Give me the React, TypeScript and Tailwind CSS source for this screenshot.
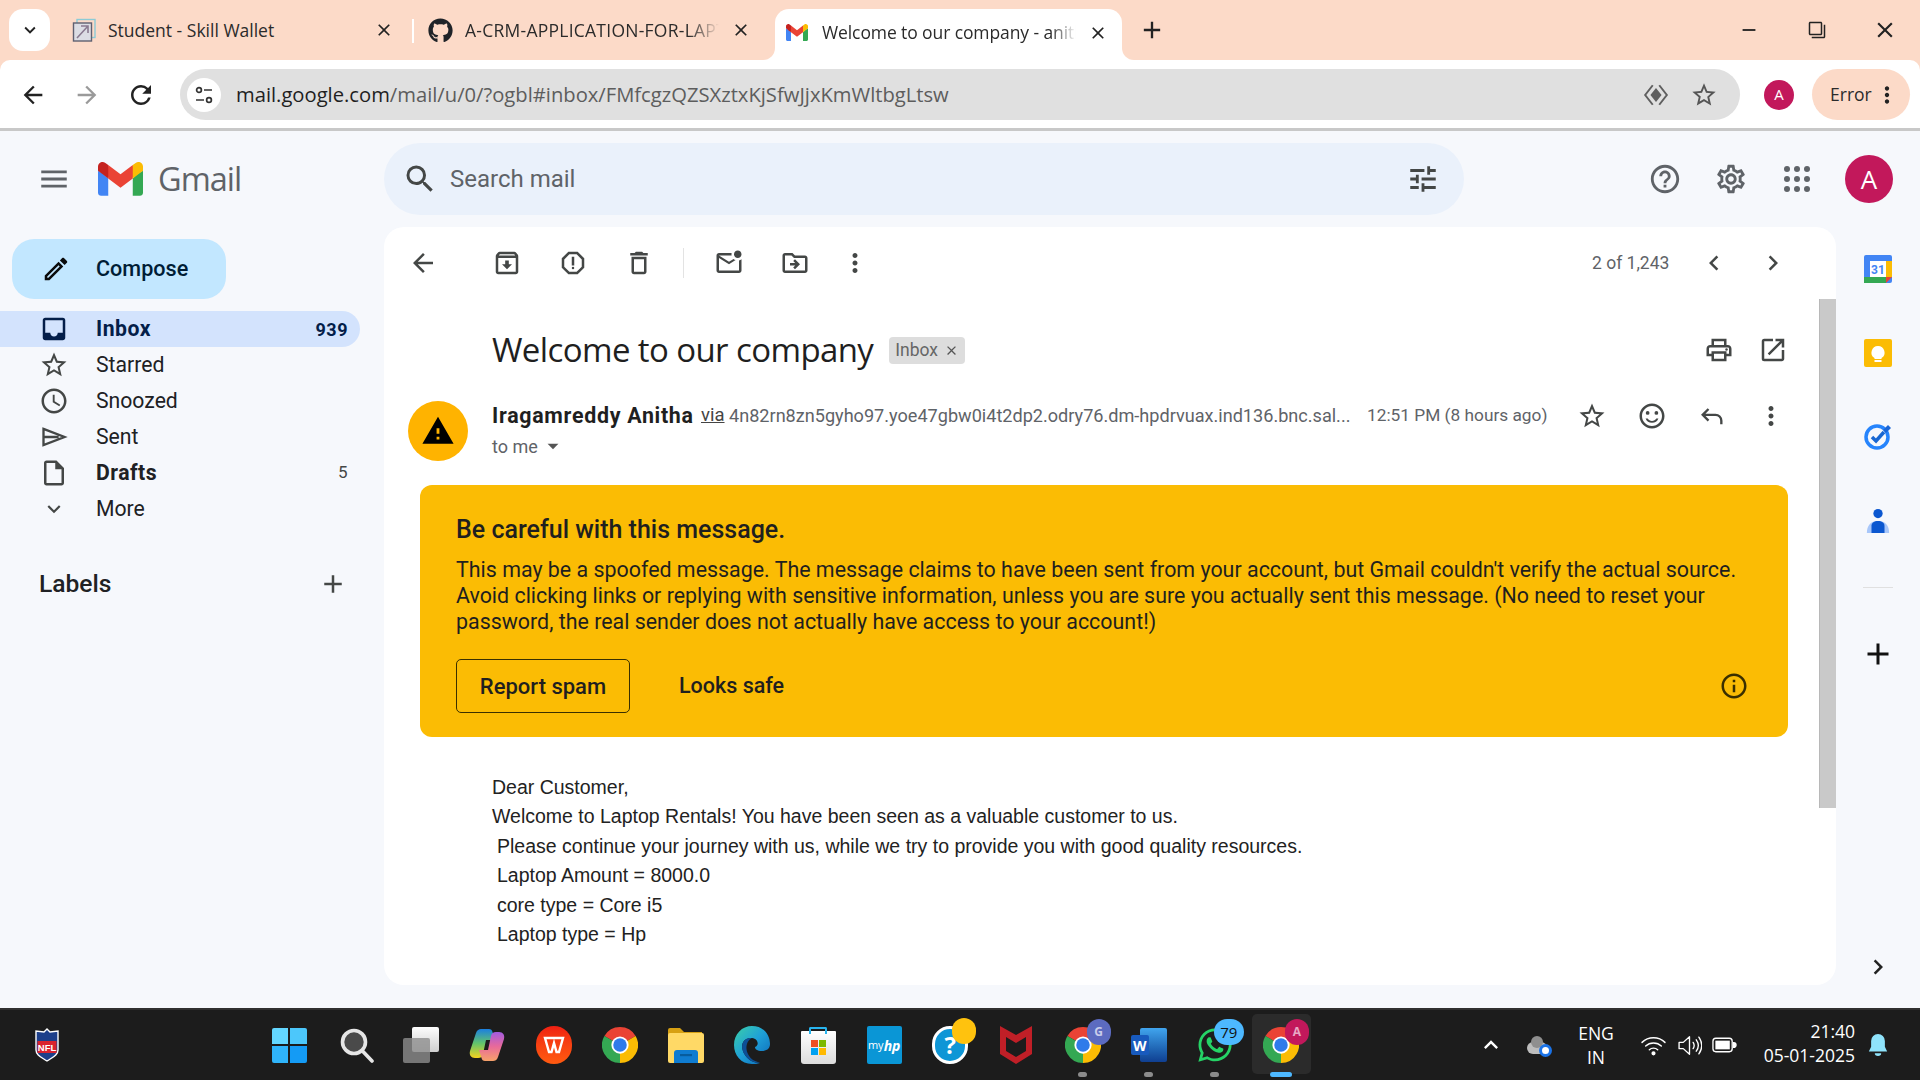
import React from "react";
import {
  MdArrowBack, MdArrowForward, MdRefresh, MdClose, MdAdd, MdMenu, MdSearch, MdTune, MdHelpOutline, MdOutlineSettings,
  MdOutlineStarBorder, MdMoreVert, MdOutlineCreate, MdInbox, MdOutlineSchedule, MdOutlineInsertDriveFile, MdExpandMore,
  MdOutlineArchive, MdOutlineReport, MdOutlineDelete, MdOutlineMarkEmailUnread, MdOutlineDriveFileMove, MdChevronLeft, MdChevronRight,
  MdOutlinePrint, MdOpenInNew, MdOutlineSentimentSatisfied, MdWarning, MdInfoOutline, MdArrowDropDown, MdKeyboardArrowDown,
  MdRemove, MdOutlineFilterNone, MdExpandLess,
} from "react-icons/md";
import { FaGithub, FaWhatsapp } from "react-icons/fa";

const GmailM = ({ cls }: { cls: string }) => (
  <svg viewBox="0 0 256 193" className={cls} preserveAspectRatio="none">
    <path fill="#4285F4" d="M58.182 192.05V93.14L27.507 65.077 0 49.504v125.091c0 9.658 7.825 17.455 17.455 17.455h40.727Z" />
    <path fill="#34A853" d="M197.818 192.05h40.727c9.659 0 17.455-7.826 17.455-17.455V49.505l-31.156 17.837-27.026 25.798v98.91Z" />
    <path fill="#EA4335" d="m58.182 93.14-4.174-38.647 4.174-36.989L128 69.868l69.818-52.364 4.669 34.992-4.669 40.644L128 145.504z" />
    <path fill="#FBBC04" d="M197.818 17.504V93.14L256 49.504V26.231c0-21.585-24.64-33.89-41.89-20.945l-16.292 12.218Z" />
    <path fill="#C5221F" d="M0 49.504l26.759 20.07L58.182 93.14V17.504L41.89 5.286C24.61-7.66 0 4.646 0 26.23v23.273Z" />
  </svg>
);

const Chrome = () => (
  <svg viewBox="0 0 48 48" className="w-[36px] h-[38px]">
    <path fill="#EA4335" d="M24 24 3.2 12A24 24 0 0 1 44.8 12Z" />
    <path fill="#FBBC04" d="M24 24 44.8 12A24 24 0 0 1 24 48Z" />
    <path fill="#34A853" d="M24 24 24 48A24 24 0 0 1 3.2 12Z" />
    <circle cx="24" cy="24" r="11.5" fill="#fff" />
    <circle cx="24" cy="24" r="9" fill="#2f7bea" />
  </svg>
);

const Cell = ({ children }: { children: React.ReactNode }) => (
  <div className="relative w-[66.13px] h-full flex items-center justify-center shrink-0">{children}</div>
);

const Dot = () => <div className="absolute bottom-[3px] w-[9px] h-[5px] rounded-full bg-[#8c8c8c]" />;

function TabStrip() {
  return (
    <div className="h-[60px] flex items-start shrink-0 text-[#2b2b2b] text-[17.5px] [font-family:'Open_Sans',sans-serif]">
      <div className="ml-[9px] mt-[9px] w-[41px] h-[42px] rounded-[14px] bg-white flex items-center justify-center">
        <MdKeyboardArrowDown className="w-[22px] h-[22px] text-[#222]" />
      </div>
      <div className="w-[10px]" />
      <div className="h-[60px] w-[352px] flex items-center">
        <svg viewBox="0 0 24 24" className="ml-[12px] w-[24px] h-[24px] shrink-0" fill="none">
          <rect x="5" y="1.5" width="18" height="18" stroke="#8ccbd6" strokeWidth="1.4" />
          <rect x="1.5" y="5" width="18" height="18" stroke="#5f6070" strokeWidth="1.4" fill="#dcdde4" />
          <path d="M5 20 16 8M9 8h7v7" stroke="#8a7a90" strokeWidth="1.6" />
        </svg>
        <div className="ml-[12px] w-[256px] whitespace-nowrap overflow-hidden">Student - Skill Wallet</div>
        <div className="w-[40px] flex justify-center"><MdClose className="w-[20px] h-[20px] text-[#222]" /></div>
      </div>
      <div className="mt-[19px] w-[2px] h-[24px] bg-[#fff]" />
      <div className="h-[60px] w-[349px] flex items-center">
        <FaGithub className="ml-[14px] w-[25px] h-[25px] text-[#1f2328] shrink-0" />
        <div className="ml-[12px] w-[254px] whitespace-nowrap overflow-hidden tracking-[0.25px] [mask-image:linear-gradient(to_right,black_88%,transparent)]">A-CRM-APPLICATION-FOR-LAPTOP-RENTALS</div>
        <div className="w-[44px] flex justify-center"><MdClose className="w-[20px] h-[20px] text-[#222]" /></div>
      </div>
      <div className="relative ml-[12px] mt-[9px] h-[51px] w-[347px] bg-white rounded-t-[14px] flex items-center pb-[4px]">
        <div className="absolute -left-[12px] bottom-0 w-[12px] h-[12px] bg-white"><div className="w-full h-full bg-[#fcdac8] rounded-br-[12px]" /></div>
        <div className="absolute -right-[12px] bottom-0 w-[12px] h-[12px] bg-white"><div className="w-full h-full bg-[#fcdac8] rounded-bl-[12px]" /></div>
        <GmailM cls="ml-[11px] w-[22px] h-[17px] shrink-0" />
        <div className="ml-[14px] w-[254px] whitespace-nowrap overflow-hidden tracking-[-0.1px] [mask-image:linear-gradient(to_right,black_90%,transparent)]">Welcome to our company - anitha</div>
        <div className="w-[44px] flex justify-center"><MdClose className="w-[20px] h-[20px] text-[#222]" /></div>
      </div>
      <div className="ml-[10px] mt-[10px] w-[40px] h-[40px] flex items-center justify-center"><MdAdd className="w-[28px] h-[28px] text-[#222]" /></div>
      <div className="ml-auto mr-[1px] flex h-[60px]">
        <div className="w-[68px] flex items-center justify-center"><MdRemove className="w-[22px] h-[22px] text-[#222]" /></div>
        <div className="w-[68px] flex items-center justify-center"><MdOutlineFilterNone className="w-[18px] h-[18px] text-[#222] -scale-x-100" /></div>
        <div className="w-[68px] flex items-center justify-center"><MdClose className="w-[26px] h-[26px] text-[#222]" /></div>
      </div>
    </div>
  );
}

function AddressBar() {
  return (
    <>
      <div className="relative h-[68px] shrink-0 bg-white rounded-t-[10px] flex items-center pt-[1px] pl-[6px] [font-family:'Open_Sans',sans-serif]">
        <div className="w-[54px] flex justify-center"><MdArrowBack className="w-[28px] h-[28px] text-[#222]" /></div>
        <div className="w-[54px] flex justify-center"><MdArrowForward className="w-[28px] h-[28px] text-[#9a9a9a]" /></div>
        <div className="w-[54px] flex justify-center"><MdRefresh className="w-[30px] h-[30px] text-[#222]" /></div>
        <div className="ml-[12px] w-[1560px] h-[51px] rounded-full bg-[#e0e0e0] flex items-center">
          <div className="ml-[7px] w-[34px] h-[34px] rounded-full bg-white flex items-center justify-center">
            <svg viewBox="0 0 20 20" className="w-[20px] h-[20px]" fill="none" stroke="#333" strokeWidth="1.7">
              <circle cx="5" cy="5" r="2.4" /><path d="M10 5h8M2 15h8" /><circle cx="15" cy="15" r="2.4" />
            </svg>
          </div>
          <div className="ml-[15px] text-[20.2px] text-[#5d5d5d] whitespace-nowrap"><span className="text-[#1f1f1f]">mail.google.com</span>/mail/u/0/?ogbl#inbox/FMfcgzQZSXztxKjSfwJjxKmWltbgLtsw</div>
          <svg viewBox="0 0 24 24" className="ml-auto w-[26px] h-[26px]" fill="none" stroke="#5f5f5f" strokeWidth="1.8">
            <path d="M9 3 2 12 9 21M15 3 22 12 15 21" /><path d="M12 7 16 12 12 17 8 12Z" fill="#5f5f5f" />
          </svg>
          <MdOutlineStarBorder className="ml-[21px] mr-[22px] w-[28px] h-[28px] text-[#555]" />
        </div>
        <div className="ml-[24px] w-[30px] h-[30px] rounded-full bg-[#c2185b] text-white text-[15px] flex items-center justify-center">A</div>
        <div className="ml-[18px] w-[98px] h-[51px] rounded-full bg-[#fcdac8] flex items-center text-[17.5px] text-[#2b2b2b]">
          <span className="ml-[18px]">Error</span>
          <MdMoreVert className="ml-[2px] w-[26px] h-[26px] text-[#222]" />
        </div>
      </div>
      <div className="h-[3px] shrink-0 bg-[#c8c8c8]" />
    </>
  );
}

function Header() {
  return (
    <div className="h-[96px] shrink-0 flex items-center">
      <div className="w-[384px] flex items-center">
        <MdMenu className="ml-[37px] w-[34px] h-[34px] text-[#5f6368]" />
        <GmailM cls="ml-[27px] w-[45px] h-[34px]" />
        <div className="ml-[15px] text-[32.5px] text-[#5f6368] [font-family:'Open_Sans',sans-serif] tracking-[-1px]">Gmail</div>
      </div>
      <div className="w-[1080px] h-[72px] rounded-full bg-[#eaf1fb] flex items-center">
        <MdSearch className="ml-[18px] w-[36px] h-[36px] text-[#444746]" />
        <div className="ml-[12px] text-[24px] text-[#5f6368] [font-family:Roboto,sans-serif]">Search mail</div>
        <MdTune className="ml-auto mr-[24px] w-[34px] h-[34px] text-[#444746]" />
      </div>
      <div className="ml-[168px] w-[66px] flex justify-center"><MdHelpOutline className="w-[34px] h-[34px] text-[#5f6368]" /></div>
      <div className="w-[66px] flex justify-center"><MdOutlineSettings className="w-[34px] h-[34px] text-[#5f6368]" /></div>
      <div className="w-[66px] flex justify-center">
        <svg viewBox="0 0 24 24" className="w-[30px] h-[30px]" fill="#5f6368">
          {[4, 12, 20].map((y) => [4, 12, 20].map((x) => <circle key={`${x}-${y}`} cx={x} cy={y} r="2.4" />))}
        </svg>
      </div>
      <div className="ml-[15px] w-[48px] h-[48px] rounded-full bg-[#c2185b] text-white text-[26px] flex items-center justify-center [font-family:'Open_Sans',sans-serif]">A</div>
    </div>
  );
}

function NavRow({ icon, label, count, active, bold }: { icon: React.ReactNode; label: string; count?: string; active?: boolean; bold?: boolean }) {
  return (
    <div className={active ? "w-[360px] h-[36px] flex items-center rounded-r-full bg-[#d3e3fd] text-[#041e49] font-bold tracking-[0.5px]" : bold ? "w-[360px] h-[36px] flex items-center text-[#202124] font-bold tracking-[0.5px]" : "w-[360px] h-[36px] flex items-center text-[#202124]"}>
      <div className="ml-[39px] w-[30px] h-[30px] flex items-center justify-center shrink-0">{icon}</div>
      <div className="ml-[27px]">{label}</div>
      {count ? <div className={active ? "ml-auto mr-[12px] text-[18px]" : "ml-auto mr-[12px] text-[17px] font-normal text-[#444746]"}>{count}</div> : null}
    </div>
  );
}

function Sidebar() {
  return (
    <div className="w-[384px] shrink-0 pt-[12px] text-[21.2px] [font-family:Roboto,sans-serif]">
      <div className="ml-[12px] w-[214px] h-[60px] rounded-[22px] bg-[#c2e7ff] flex items-center text-[#001d35] font-medium text-[21.6px]">
        <MdOutlineCreate className="ml-[29px] w-[30px] h-[30px] text-[#0b0b0b]" />
        <div className="ml-[25px] pt-[1px]">Compose</div>
      </div>
      <div className="mt-[12px]">
        <NavRow active label="Inbox" count="939" icon={<MdInbox className="w-[30px] h-[30px] text-[#041e49]" />} />
        <NavRow label="Starred" icon={<MdOutlineStarBorder className="w-[30px] h-[30px] text-[#444746]" />} />
        <NavRow label="Snoozed" icon={<MdOutlineSchedule className="w-[30px] h-[30px] text-[#444746]" />} />
        <NavRow label="Sent" icon={
          <svg viewBox="0 0 24 24" className="w-[28px] h-[28px]" fill="none" stroke="#444746" strokeWidth="2"><path d="M3 5 21 12 3 19V5ZM3 12h13" /></svg>
        } />
        <NavRow bold label="Drafts" count="5" icon={<MdOutlineInsertDriveFile className="w-[30px] h-[30px] text-[#444746]" />} />
        <NavRow label="More" icon={<MdExpandMore className="w-[26px] h-[26px] text-[#444746]" />} />
      </div>
      <div className="mt-[37px] ml-[39px] w-[309px] h-[40px] flex items-center justify-between text-[24.6px] font-medium text-[#202124]">
        <span>Labels</span>
        <MdAdd className="w-[30px] h-[30px] text-[#444746]" />
      </div>
    </div>
  );
}

const IC = "w-[30px] h-[30px] text-[#444746]";

function MailCard() {
  return (
    <div className="w-[1452px] h-[758px] shrink-0 rounded-[20px] bg-white overflow-hidden flex [font-family:Roboto,sans-serif]">
      <div className="w-[1435px] shrink-0 flex flex-col">
        <div className="h-[72px] shrink-0 flex items-center">
          <div className="ml-[6px] w-[66px] flex justify-center"><MdArrowBack className={IC} /></div>
          <div className="ml-[18px] w-[66px] flex justify-center"><MdOutlineArchive className={IC} /></div>
          <div className="w-[66px] flex justify-center"><MdOutlineReport className={IC} /></div>
          <div className="w-[66px] flex justify-center"><MdOutlineDelete className={IC} /></div>
          <div className="ml-[11px] w-px h-[30px] bg-[#e3e3e3]" />
          <div className="ml-[12px] w-[66px] flex justify-center"><MdOutlineMarkEmailUnread className={IC} /></div>
          <div className="w-[66px] flex justify-center"><MdOutlineDriveFileMove className={IC} /></div>
          <div className="w-[54px] flex justify-center"><MdMoreVert className={IC} /></div>
          <div className="ml-[710px] text-[17.5px] text-[#5f6368] w-[80px] whitespace-nowrap">2 of 1,243</div>
          <div className="ml-[12px] w-[60px] flex justify-center"><MdChevronLeft className={IC} /></div>
          <div className="w-[58px] flex justify-center"><MdChevronRight className={IC} /></div>
        </div>
        <div className="h-[102px] shrink-0 flex items-center pl-[108px]">
          <div className="text-[33px] text-[#1f1f1f] [font-family:'Open_Sans',sans-serif] tracking-[-0.6px]">Welcome to our company</div>
          <div className="ml-[16px] w-[76px] h-[27px] rounded-[4px] bg-[#dddddd] text-[#666] text-[17.5px] flex items-center pl-[6px]">
            Inbox<MdClose className="ml-[6px] w-[15px] h-[15px] text-[#555]" />
          </div>
          <MdOutlinePrint className="ml-auto w-[30px] h-[30px] text-[#444746]" />
          <MdOpenInNew className="ml-[24px] mr-[31px] w-[30px] h-[30px] text-[#444746]" />
        </div>
        <div className="h-[84px] shrink-0 flex items-start">
          <div className="ml-[24px] w-[60px] h-[60px] rounded-full bg-[#ffb300] flex items-center justify-center shrink-0"><MdWarning className="w-[34px] h-[34px] text-black" /></div>
          <div className="ml-[24px] w-[1327px]">
            <div className="h-[30px] flex items-center whitespace-nowrap">
              <span className="w-[203px] shrink-0 text-[21.4px] font-bold tracking-[0.7px] text-[#1f1f1f]">Iragamreddy Anitha</span>
              <span className="ml-[6px] w-[23px] shrink-0 text-[18.5px] text-[#444] underline">via</span>
              <span className="ml-[5px] w-[621px] shrink-0 text-[18.1px] text-[#5f6368]">4n82rn8zn5gyho97.yoe47gbw0i4t2dp2.odry76.dm-hpdrvuax.ind136.bnc.sal...</span>
              <span className="ml-[17px] w-[195px] shrink-0 text-[17.3px] text-[#5f6368]">12:51 PM (8 hours ago)</span>
              <div className="w-[60px] flex justify-center"><MdOutlineStarBorder className={IC} /></div>
              <div className="w-[60px] flex justify-center"><MdOutlineSentimentSatisfied className={IC} /></div>
              <div className="w-[60px] flex justify-center">
                <svg viewBox="0 0 24 24" className="w-[28px] h-[28px]" fill="none" stroke="#444746" strokeWidth="2"><path d="M9 6 4 11l5 5M4 11h11a5 5 0 0 1 5 5v3" /></svg>
              </div>
              <div className="w-[58px] flex justify-center"><MdMoreVert className={IC} /></div>
            </div>
            <div className="h-[30px] flex items-center text-[18px] text-[#5f6368]">to me<MdArrowDropDown className="ml-[2px] w-[26px] h-[26px] text-[#555]" /></div>
          </div>
        </div>
        <div className="ml-[36px] w-[1368px] h-[252px] shrink-0 rounded-[12px] bg-[#fbbc04] pl-[36px] pt-[28px] text-[#1f1f1f]">
          <div className="h-[34px] flex items-center text-[25px] font-medium">Be careful with this message.</div>
          <div className="mt-[10px] w-[1300px] text-[21.42px] leading-[26px]">This may be a spoofed message. The message claims to have been sent from your account, but Gmail couldn't verify the actual source. Avoid clicking links or replying with sensitive information, unless you are sure you actually sent this message. (No need to reset your password, the real sender does not actually have access to your account!)</div>
          <div className="mt-[24px] flex items-center h-[54px]">
            <div className="w-[174px] h-[54px] rounded-[5px] border-[1.5px] border-[#3a2f00] flex items-center justify-center text-[22px] font-medium">Report spam</div>
            <div className="ml-[49px] text-[21.5px] font-medium">Looks safe</div>
            <MdInfoOutline className="ml-auto mr-[39px] w-[30px] h-[30px] text-[#3a2f00]" />
          </div>
        </div>
        <div className="pl-[108px] pt-[36px] text-[19.5px] text-[#222] [font-family:'Liberation_Sans',sans-serif]">
          <div className="h-[29.4px] leading-[29.4px]">Dear Customer,</div>
          <div className="h-[29.4px] leading-[29.4px]">Welcome to Laptop Rentals! You have been seen as a valuable customer to us.</div>
          <div className="pl-[5px] h-[29.4px] leading-[29.4px]">Please continue your journey with us, while we try to provide you with good quality resources.</div>
          <div className="pl-[5px] h-[29.4px] leading-[29.4px]">Laptop Amount = 8000.0</div>
          <div className="pl-[5px] h-[29.4px] leading-[29.4px]">core type = Core i5</div>
          <div className="pl-[5px] h-[29.4px] leading-[29.4px]">Laptop type = Hp</div>
        </div>
      </div>
      <div className="w-[17px] shrink-0 pt-[72px]">
        <div className="h-[509px] bg-[#c9c9c9] border-l border-[#b8b8b8]" />
      </div>
    </div>
  );
}

function SidePanel() {
  return (
    <div className="w-[84px] shrink-0 flex flex-col items-center pb-[26px]">
      <div className="h-[84px] flex items-center justify-center">
        <svg viewBox="0 0 28 28" className="w-[28px] h-[28px]">
          <rect width="28" height="28" rx="2" fill="#4285F4" />
          <rect x="21" y="6" width="7" height="16" fill="#FBBC04" />
          <rect y="22" width="22" height="6" fill="#34A853" />
          <path d="M22 22h6l-6 6z" fill="#EA4335" />
          <rect x="6" y="6" width="16" height="16" fill="#fff" />
          <text x="14" y="19" textAnchor="middle" fontSize="12" fontWeight="700" fill="#4285F4" fontFamily="Roboto">31</text>
        </svg>
      </div>
      <div className="h-[84px] flex items-center justify-center">
        <svg viewBox="0 0 28 28" className="w-[28px] h-[28px]">
          <rect width="28" height="28" rx="2" fill="#FBBC04" />
          <path d="M14 7a6.5 6.5 0 0 0-3.5 12v1h7v-1A6.5 6.5 0 0 0 14 7Z" fill="#fff" />
          <rect x="10.5" y="21" width="7" height="2" fill="#fff" />
        </svg>
      </div>
      <div className="h-[84px] pb-[2px] flex items-center justify-center">
        <svg viewBox="0 0 28 28" className="w-[28px] h-[28px]" fill="none">
          <circle cx="13" cy="15" r="11" stroke="#2684fc" strokeWidth="3.5" />
          <path d="M8 15l4 4 8-9" stroke="#1967d2" strokeWidth="3.5" />
          <path d="M19 8l5-5 3 3-5 5z" fill="#1a66d6" />
        </svg>
      </div>
      <div className="h-[84px] flex items-center justify-center">
        <svg viewBox="0 0 28 28" className="w-[26px] h-[26px]">
          <circle cx="14" cy="6" r="5" fill="#0b57d0" />
          <path d="M2 27c0-8 4-13 12-13s12 5 12 13z" fill="#a8c7fa" />
          <path d="M7 27v-8c0-3 3-5 7-5s7 2 7 5v8z" fill="#0b57d0" />
        </svg>
      </div>
      <div className="mt-[24px] w-[30px] h-px bg-[#e0e0e0]" />
      <MdAdd className="mt-[48px] w-[36px] h-[36px] text-[#111]" />
      <MdChevronRight className="mt-auto w-[30px] h-[30px] text-[#222]" />
    </div>
  );
}

function Taskbar() {
  return (
    <div className="h-[72px] shrink-0 bg-[#1c1c1c] border-t-2 border-[#303030] flex items-center text-white [font-family:'Open_Sans',sans-serif]">
      <div className="ml-[14px] w-[66px] h-[70px] flex items-center justify-center">
        <svg viewBox="0 0 26 34" className="w-[26px] h-[34px]">
          <path d="M13 1 16 4 24 3V22C24 27 19 29 13 33 7 29 2 27 2 22V3L10 4Z" fill="#1d3f8a" stroke="#fff" strokeWidth="1.4" />
          <rect x="3.5" y="13" width="19" height="12" fill="#d9232e" />
          <text x="13" y="23" textAnchor="middle" fontSize="9.5" fontWeight="700" fill="#fff" fontFamily="Liberation Sans">NFL</text>
        </svg>
      </div>
      <div className="ml-[176px] flex h-[70px]">
        <Cell>
          <div className="grid grid-cols-2 gap-[2px] w-[35px] h-[35px]">
            <div className="bg-[#63d6ff] rounded-tl-[2px]" /><div className="bg-[#4cc7fb] rounded-tr-[2px]" />
            <div className="bg-[#2fb4fa] rounded-bl-[2px]" /><div className="bg-[#149bf5] rounded-br-[2px]" />
          </div>
        </Cell>
        <Cell>
          <svg viewBox="0 0 36 36" className="ml-[3px] w-[36px] h-[36px]" fill="#4a4a4a" stroke="#e6e6e6" strokeWidth="3.6" strokeLinecap="round"><circle cx="15" cy="15" r="11.5" /><path d="M23.5 24 33 34" /></svg>
        </Cell>
        <Cell>
          <div className="relative w-[36px] h-[36px]">
            <div className="absolute right-0 top-0 w-[27px] h-[25px] rounded-[2px] bg-gradient-to-b from-[#fdfdfd] to-[#cfcfcf]" />
            <div className="absolute left-0 bottom-0 w-[27px] h-[25px] rounded-[2px] bg-[#8d8d8d]/80" />
          </div>
        </Cell>
        <Cell>
          <svg viewBox="0 0 36 36" className="w-[36px] h-[36px]">
            <defs>
              <linearGradient id="cp1" x1="0" y1="0" x2="0" y2="1"><stop offset="0" stopColor="#1b7fe0" /><stop offset="0.5" stopColor="#63c56a" /><stop offset="1" stopColor="#f4d21f" /></linearGradient>
              <linearGradient id="cp2" x1="0" y1="0" x2="0" y2="1"><stop offset="0" stopColor="#a25be0" /><stop offset="0.5" stopColor="#e86a9a" /><stop offset="1" stopColor="#f6a26a" /></linearGradient>
            </defs>
            <path d="M12 2h8c2 0 3 1 3.500 3L26 13 17 13 14 27c-1 3-2 4-5 4H6c-4 0-6-3-5-7L7 6c1-3 3-4 5-4Z" fill="url(#cp1)" />
            <path d="M24 34h-8c-2 0-3-1-3.500-3L10 23l9 0 3-14c1-3 2-4 5-4h3c4 0 6 3 5 7L29 30c-1 3-3 4-5 4Z" fill="url(#cp2)" />
          </svg>
        </Cell>
        <Cell>
          <div className="w-[36px] h-[38px] rounded-full bg-gradient-to-b from-[#f01e12] to-[#ff5a10] flex items-center justify-center">
            <svg viewBox="0 0 24 24" className="w-[24px] h-[24px]" fill="none" stroke="#fff" strokeWidth="2.400"><path d="M3 5h18l-4 14h-2.500L12 10l-2.500 9H7Z" /></svg>
          </div>
        </Cell>
        <Cell><Chrome /></Cell>
        <Cell>
          <svg viewBox="0 0 36 36" className="w-[36px] h-[36px]">
            <path d="M0 3a2 2 0 0 1 2-2h10l4 4h18v8H0z" fill="#d7a013" />
            <rect y="6" width="36" height="30" rx="2" fill="#ffd966" />
            <path d="M6 36V26a3 3 0 0 1 3-3h18a3 3 0 0 1 3 3v10z" fill="#0f7cd1" />
            <rect x="12" y="27" width="12" height="2.2" fill="#075c9e" />
          </svg>
        </Cell>
        <Cell>
          <svg viewBox="0 0 36 38" className="w-[36px] h-[38px]">
            <defs><linearGradient id="ed" x1="0" y1="0" x2="1" y2="1"><stop offset="0" stopColor="#3bd0a8" /><stop offset="0.5" stopColor="#1e9fd8" /><stop offset="1" stopColor="#0c66b5" /></linearGradient></defs>
            <path d="M18 0C29 0 36 8 36 18c0 5-4 7-8 7-5 0-7-2-7-4 4-1 4-8-3-9C9 11 5 20 11 29c3 5 9 8 15 8-3 1-5 1-8 1C7 38 0 29 0 19 0 8 8 0 18 0Z" fill="url(#ed)" />
            <path d="M11 29c-6-9-2-18 7-17-8 4-7 16 1 22 2 1 5 2 7 3-6 0-12-3-15-8Z" fill="#0d4f96" />
          </svg>
        </Cell>
        <Cell>
          <div className="relative w-[35px] h-[33px] mt-[5px] rounded-b-[3px] rounded-t-[1px] bg-gradient-to-b from-white to-[#dcdcdc] flex items-center justify-center">
            <div className="absolute -top-[4px] left-[8px] w-[18px] h-[7px] border-2 border-b-0 border-[#28b4ee] rounded-t-[2px]" />
            <div className="grid grid-cols-2 gap-[1px] w-[15px] h-[15px]">
              <div className="bg-[#ef4f25]" /><div className="bg-[#7db900]" /><div className="bg-[#00a1f1]" /><div className="bg-[#ffb900]" />
            </div>
          </div>
        </Cell>
        <Cell>
          <div className="w-[35px] h-[38px] rounded-[2px] bg-[#0a96d6] text-white text-[11px] flex items-center justify-center [font-family:'Open_Sans',sans-serif]">my<span className="italic font-bold text-[14px]">hp</span></div>
        </Cell>
        <Cell>
          <div className="relative w-[36px] h-[38px] rounded-full bg-[#0e96d6] border-[3px] border-white flex items-center justify-center text-white text-[24px] font-bold">
            ?
            <div className="absolute -right-[11px] -top-[11px] w-[24px] h-[26px] rounded-full bg-[#ffc20e]" />
          </div>
        </Cell>
        <Cell>
          <svg viewBox="0 0 32 38" className="w-[32px] h-[38px]"><path d="M0 0 16 9 32 0V28L16 38 0 28ZM6 11V25L16 31 26 25V11L16 17Z" fill="#c01f27" fillRule="evenodd" /></svg>
        </Cell>
        <Cell>
          <Chrome />
          <div className="absolute right-[5px] top-[9px] w-[24px] h-[26px] rounded-full bg-[#5c6bc0] text-[#c9cdea] text-[12px] font-bold flex items-center justify-center">G</div>
          <Dot />
        </Cell>
        <Cell>
          <div className="relative w-[36px] h-[34px]">
            <div className="absolute right-0 top-0 w-[27px] h-[34px] rounded-[2px] bg-gradient-to-b from-[#41a5ee] to-[#103f91]" />
            <div className="absolute left-0 top-[7px] w-[18px] h-[20px] rounded-[2px] bg-[#185abd] text-white text-[14px] font-bold flex items-center justify-center">W</div>
          </div>
          <Dot />
        </Cell>
        <Cell>
          <FaWhatsapp className="w-[36px] h-[38px] text-[#25d366]" />
          <div className="absolute right-[4px] top-[9px] w-[30px] h-[26px] rounded-full bg-[#4db8ff] text-[#111] text-[15px] flex items-center justify-center">79</div>
          <Dot />
        </Cell>
        <Cell>
          <div className="absolute left-[4px] right-[3px] top-[4px] bottom-[6px] rounded-[5px] bg-[#2b2b2b]" />
          <div className="relative flex"><Chrome /></div>
          <div className="absolute right-[5px] top-[9px] w-[24px] h-[26px] rounded-full bg-[#c2185b] text-[#e8a8c4] text-[12px] font-bold flex items-center justify-center">A</div>
          <div className="absolute bottom-[3px] w-[22px] h-[5px] rounded-full bg-[#4db8ff]" />
        </Cell>
      </div>
      <div className="ml-[156px] flex items-center h-[70px]">
        <div className="w-[42px] flex justify-center"><MdExpandLess className="w-[28px] h-[28px] text-white" /></div>
        <div className="w-[54px] flex justify-center">
          <div className="relative w-[24px] h-[18px]">
            <div className="absolute left-0 bottom-0 w-[20px] h-[12px] rounded-full bg-[#bdbdbd]" />
            <div className="absolute left-[4px] top-0 w-[12px] h-[12px] rounded-full bg-[#8f8f8f]" />
            <div className="absolute -right-[1px] -bottom-[3px] w-[13px] h-[13px] rounded-full bg-white border-[3px] border-[#1a73e8]" />
          </div>
        </div>
        <div className="w-[60px] text-center text-[17.5px] leading-[24px] text-white">ENG<br />IN</div>
        <div className="ml-[6px] w-[42px] flex justify-center">
          <svg viewBox="0 0 24 20" className="w-[25px] h-[21px]" fill="none" stroke="#fff" strokeWidth="1.400" strokeLinecap="round"><path d="M1 7c6-6 16-6 22 0M4.500 10.500c4-4 11-4 15 0M8 14c2.200-2 5.800-2 8 0" /><circle cx="12" cy="17.500" r="1.300" fill="#fff" /></svg>
        </div>
        <div className="w-[30px] flex justify-center">
          <svg viewBox="0 0 24 22" className="w-[25px] h-[23px]" fill="none" stroke="#fff" strokeWidth="1.300" strokeLinecap="round" strokeLinejoin="round"><path d="M2 8h4l6-5.500v17L6 14H2ZM15.500 8c1.300 2 1.300 4 0 6M18.500 5.500c2.500 3.500 2.500 7.500 0 11M21 3c3.500 5 3.500 11 0 16" /></svg>
        </div>
        <div className="w-[40px] flex justify-center">
          <svg viewBox="0 0 26 16" className="w-[25px] h-[16px]" fill="none" stroke="#fff" strokeWidth="1.400"><rect x="1" y="1" width="20" height="14" rx="3" /><rect x="3.500" y="3.500" width="15" height="9" fill="#fff" stroke="none" /><path d="M22.500 5.500a2.500 2.500 0 0 1 0 5z" fill="#fff" /></svg>
        </div>
        <div className="w-[111px] -mt-[5px] text-right text-[17.5px] leading-[24px] whitespace-nowrap">21:40<br />05-01-2025</div>
        <div className="w-[46px] flex justify-center">
          <svg viewBox="0 0 24 26" className="w-[22px] h-[26px]" fill="#8fe3fb"><path d="M12 1a7.500 7.500 0 0 0-7.500 7.500V15L2 20h20l-2.500-5V8.500A7.500 7.500 0 0 0 12 1Z" /><path d="M8.500 22a3.500 3 0 0 0 7 0z" /></svg>
        </div>
      </div>
    </div>
  );
}

export default function App() {
  return (
    <div className="w-[1920px] h-[1080px] flex flex-col overflow-hidden bg-[#fcdac8]">
      <TabStrip />
      <AddressBar />
      <div className="h-[877px] shrink-0 flex flex-col bg-[#f6f8fc]">
        <Header />
        <div className="flex h-[781px]">
          <Sidebar />
          <MailCard />
          <SidePanel />
        </div>
      </div>
      <Taskbar />
    </div>
  );
}
